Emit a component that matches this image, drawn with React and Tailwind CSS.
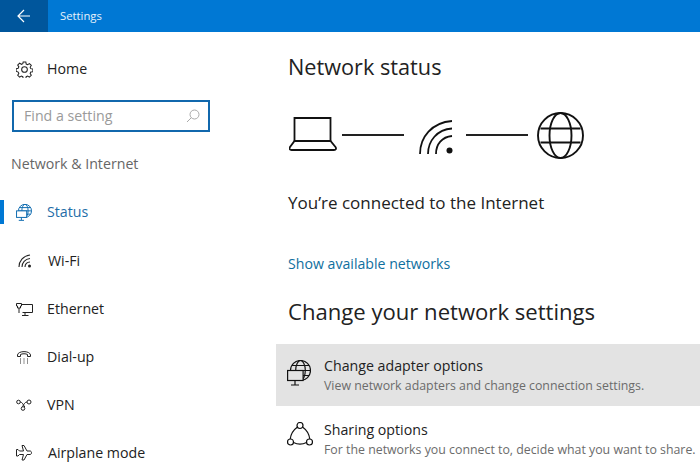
import React from "react";

const font = { fontFamily: '"Open Sans", "Noto Sans", sans-serif' };

const GearIcon = () => (
  <svg width="17" height="17" viewBox="0 0 18 18" fill="none" stroke="#222" strokeWidth="1.100">
    <circle cx="9" cy="9" r="3" />
    <path d="M7.600 1h2.800l.4 2.200 1.500.7 1.900-1.200 2 2-1.200 1.900.7 1.500 2.200.4v2.800l-2.200.4-.7 1.500 1.200 1.900-2 2-1.900-1.200-1.500.7-.4 2.100H7.600l-.4-2.100-1.500-.7-1.900 1.200-2-2 1.200-1.900-.7-1.500L.1 10.900V8.100l2.200-.4.7-1.500-1.200-1.900 2-2 1.900 1.200 1.500-.7z" />
  </svg>
);

// globe with a monitor in front, used for Status and Change adapter options
const NetIcon = ({ color = "#111", bg = "#fff", width = 24, height = 26, strokeWidth = 1.200 }) => (
  <svg width={width} height={height} viewBox="0 0 24 26" fill="none" stroke={color} strokeWidth={strokeWidth}>
    <circle cx="13.500" cy="10.500" r="10" />
    <ellipse cx="13.500" cy="10.500" rx="4.800" ry="10" />
    <path d="M5 5.500h17M4 10.500h19M14 15.500h8" />
    <rect x="0.600" y="10.500" width="15.500" height="10" fill={bg} />
    <path d="M8 20.500v4M4 25h8" />
  </svg>
);

const WifiIcon = () => (
  <svg width="14" height="14" viewBox="0 0 14 14" fill="none" stroke="#222" strokeWidth="1.100">
    <path d="M1 13C1 7 5 2 12 1M4 13C4 9 7 5 12 4.500M7 13c0-3 2-5 5-5" />
    <circle cx="11.500" cy="12" r="1.500" fill="#222" stroke="none" />
  </svg>
);

const EthernetIcon = () => (
  <svg width="17" height="13" viewBox="0 0 17 13" fill="none" stroke="#222" strokeWidth="1">
    <path d="M6 1.500h10.500v8H6.500M9 9.500v3M6 12.500h6.500" />
    <path d="M.5.500h5v2.500h-1v2h-3v-2h-1z" />
    <path d="M3 5v5" />
  </svg>
);

const DialIcon = () => (
  <svg width="14" height="14" viewBox="0 0 14 14" fill="none" stroke="#222" strokeWidth="1">
    <path d="M.5 5C1 .5 13 .5 13.500 5v1.500h-3V4.500c-1.500-1-5.500-1-7 0v2h-3z" />
    <path d="M3 9h1M6.500 9h1M10 9h1M3 11h1M6.500 11h1M10 11h1M3 13h1M6.500 13h1M10 13h1" />
  </svg>
);

const VpnIcon = () => (
  <svg width="16" height="12" viewBox="0 0 16 12" fill="none" stroke="#222" strokeWidth="1">
    <circle cx="2.500" cy="3" r="1.800" />
    <circle cx="13" cy="3" r="2" />
    <circle cx="7" cy="9.500" r="1.800" />
    <path d="M4.300 3c2 0 3 3 4.500 5M11 3C9 3 8 5 6.500 7.700" />
  </svg>
);

const PlaneIcon = () => (
  <svg width="16" height="16" viewBox="0 0 16 16" fill="none" stroke="#222" strokeWidth="1">
    <path d="M6 .5h2l3 5.500h3c2 0 2 3.500 0 3.500h-3l-3 5.500H6l1.500-5.500H3.500L2 11H.5V4.500H2L3.500 6h4z" />
  </svg>
);

const LaptopIcon = () => (
  <svg width="48" height="34" viewBox="0 0 48 34" fill="none" stroke="#111" strokeWidth="1.800">
    <path d="M5.500 24V1h36v23" />
    <path d="M5.500 24h36l5 6c1 1.500.5 3-1.500 3H2.500c-2 0-2.500-1.500-1.500-3z" />
  </svg>
);

const BigWifiIcon = () => (
  <svg width="34" height="34" viewBox="0 0 34 34" fill="none" stroke="#111" strokeWidth="1.800">
    <path d="M1 34C1 17 13 2.500 33 1M9 34C9 21 18 9.500 33 8.500M17 34c0-10 6-17 16-18" />
    <circle cx="30.500" cy="30.500" r="3" fill="#111" stroke="none" />
  </svg>
);

const GlobeIcon = () => (
  <svg width="47" height="47" viewBox="0 0 47 47" fill="none" stroke="#111" strokeWidth="1.900">
    <circle cx="23.500" cy="23.500" r="22.500" />
    <ellipse cx="23.500" cy="23.500" rx="11" ry="22.500" />
    <path d="M3.500 16.500h40M3.500 30.500h40" />
  </svg>
);

const ShareIcon = () => (
  <svg width="26" height="25" viewBox="0 0 26 25" fill="none" stroke="#111" strokeWidth="1.200">
    <circle cx="13" cy="3.500" r="3" />
    <circle cx="3.500" cy="20" r="3" />
    <circle cx="22.500" cy="20" r="3" />
    <path d="M10.500 5C7 7.500 4 11 3.200 17M15.500 5c3.500 2.500 6.500 6 7.300 12M6.500 20.500c4 2 9 2 13 0" />
  </svg>
);

const Connector = () => <div className="w-[62px] h-[2px] mt-px bg-[#222]" />;

const navItems = [
  { label: "Wi-Fi", icon: <WifiIcon />, offset: "pl-[2px]", text: "ml-px" },
  { label: "Ethernet", icon: <EthernetIcon />, offset: "", text: "" },
  { label: "Dial-up", icon: <DialIcon />, offset: "pl-px", text: "" },
  { label: "VPN", icon: <VpnIcon />, offset: "", text: "" },
  { label: "Airplane mode", icon: <PlaneIcon />, offset: "", text: "ml-px" },
];

const NavRow = ({ item }) => (
  <div className="h-[48px] pt-[2px] flex items-center pl-[16px]">
    <div className={`w-[31px] flex items-center ${item.offset}`}>{item.icon}</div>
    <span className={`text-[14.200px] text-[#222] ${item.text}`}>{item.label}</span>
  </div>
);

export default function App() {
  return (
    <div className="w-[700px] h-[468px] overflow-hidden bg-white" style={font}>
      <header className="h-[32px] bg-[#0078d4] flex items-center">
        <div className="w-[48px] h-full bg-[#00569c] flex items-center justify-center">
          <svg width="14" height="14" viewBox="0 0 14 14" fill="none" stroke="#fff" strokeWidth="1.200">
            <path d="M13 7H1M7 1L1 7l6 6" />
          </svg>
        </div>
        <span className="ml-[12px] text-[11.300px] text-[#e6f2fb]">Settings</span>
      </header>

      <div className="flex h-[436px]">
        <aside className="w-[276px] shrink-0">
          <div className="h-[68px] pt-[6px] flex items-center pl-[16px]">
            <div className="w-[31px] flex items-center"><GearIcon /></div>
            <span className="text-[14.200px] text-[#222]">Home</span>
          </div>
          <div className="mx-[12px] w-[198px] h-[32px] border-2 border-[#1168ad] flex items-center justify-between pl-[10px] pr-[8px]">
            <span className="text-[14.200px] text-[#9a9a9a]">Find a setting</span>
            <svg width="14" height="14" viewBox="0 0 14 14" fill="none" stroke="#aaa" strokeWidth="1">
              <circle cx="8.500" cy="5.500" r="4.500" />
              <path d="M5.300 8.700L1 13" />
            </svg>
          </div>
          <div className="h-[56px] pt-[8px] flex items-center pl-[11px] text-[14.200px] text-[#666]">
            Network &amp; Internet
          </div>
          <div className="relative h-[48px] flex items-center pl-[16px]">
            <div className="absolute left-0 top-[12px] w-[4px] h-[24px] bg-[#0078d4]" />
            <div className="w-[31px] flex items-center">
              <NetIcon color="#0f6cb0" width={16} height={17} strokeWidth={1.500} />
            </div>
            <span className="text-[14.200px] text-[#1f6ea8]">Status</span>
          </div>
          {navItems.map((item) => (
            <NavRow key={item.label} item={item} />
          ))}
        </aside>

        <main className="flex-1 min-w-0">
          <h1 className="pl-[12px] mt-[18px] h-[34px] leading-[34px] text-[21.700px] text-[#222] font-normal">Network status</h1>
          <div className="pl-[13px] mt-[26px] h-[48px] flex items-center">
            <LaptopIcon />
            <div className="ml-[5px]"><Connector /></div>
            <div className="ml-[15px] mt-[5px]"><BigWifiIcon /></div>
            <div className="ml-[13px]"><Connector /></div>
            <div className="ml-[9px] mt-[2px]"><GlobeIcon /></div>
          </div>
          <p className="pl-[12px] mt-[33px] h-[24px] leading-[24px] text-[17px] text-[#222]">You’re connected to the Internet</p>
          <p className="pl-[12px] mt-[37px] h-[24px] leading-[24px] text-[14.150px] text-[#0f6f9e]">Show available networks</p>
          <h2 className="pl-[12px] mt-[18px] h-[34px] leading-[34px] text-[22.100px] text-[#222] font-normal">Change your network settings</h2>
          <div className="mt-[16px] h-[62px] bg-[#e3e3e3] flex items-center pl-[11px]">
            <div className="w-[37px] -mt-[4px]"><NetIcon bg="#e3e3e3" /></div>
            <div>
              <div className="text-[14.200px] leading-[20px] text-[#222]">Change adapter options</div>
              <div className="text-[12.350px] leading-[19px] text-[#6b6b6b]">View network adapters and change connection settings.</div>
            </div>
          </div>
          <div className="pt-[14px] flex items-start pl-[11px]">
            <div className="w-[37px] pt-[2px]"><ShareIcon /></div>
            <div>
              <div className="text-[14.200px] leading-[20px] text-[#222]">Sharing options</div>
              <div className="text-[12.350px] leading-[19px] text-[#6b6b6b] whitespace-nowrap">For the networks you connect to, decide what you want to share.</div>
            </div>
          </div>
        </main>
      </div>
    </div>
  );
}
